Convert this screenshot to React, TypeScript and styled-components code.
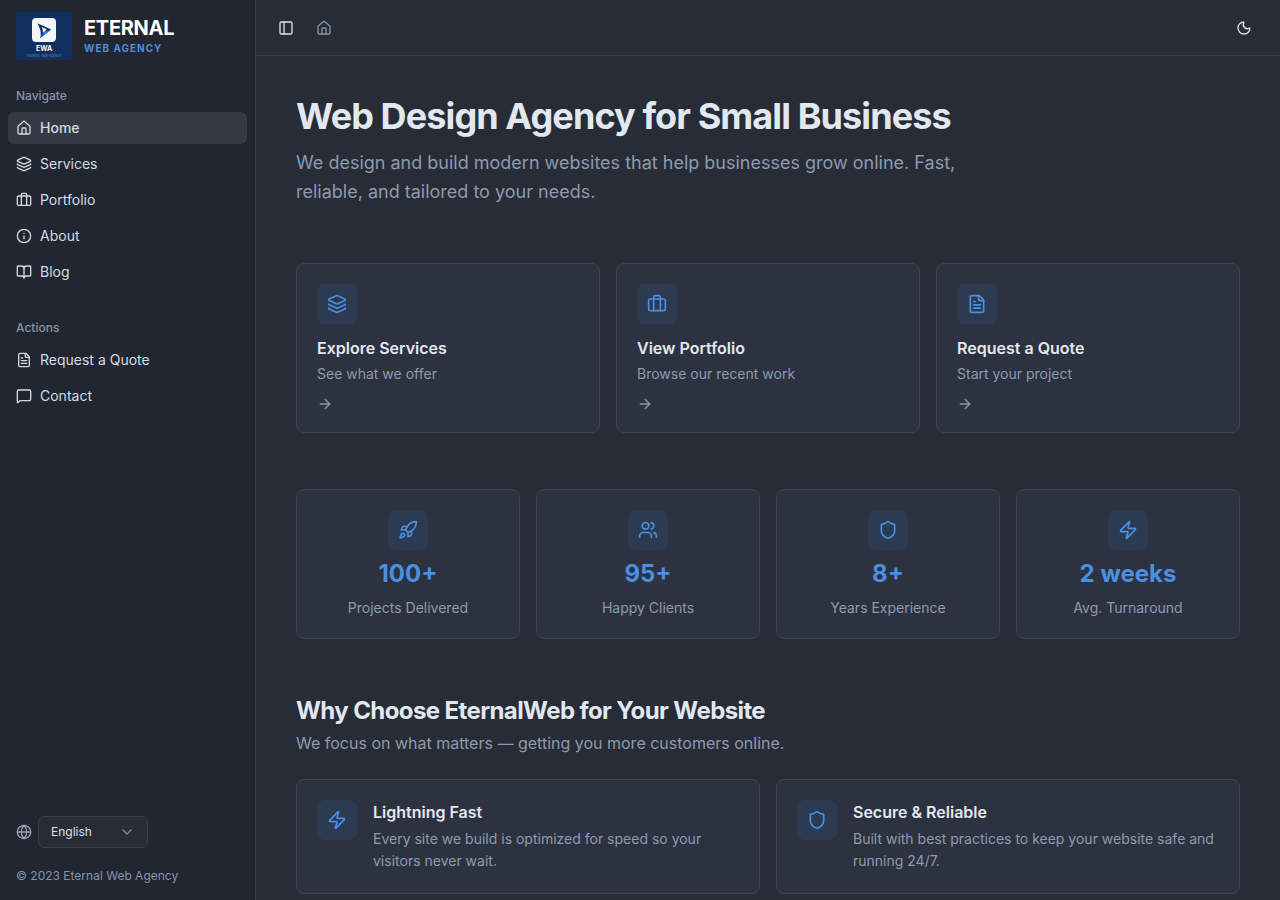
import { ReactNode } from "react";
import styled, { createGlobalStyle } from "styled-components";
import {
  ArrowRight,
  BookOpen,
  Briefcase,
  ChevronDown,
  FileText,
  Globe,
  House,
  Info,
  Layers,
  MessageSquare,
  Moon,
  PanelLeft,
  Rocket,
  Shield,
  Users,
  Zap,
} from "lucide-react";

const navigate = [
  { label: "Home", icon: <House size={16} />, active: true },
  { label: "Services", icon: <Layers size={16} /> },
  { label: "Portfolio", icon: <Briefcase size={16} /> },
  { label: "About", icon: <Info size={16} /> },
  { label: "Blog", icon: <BookOpen size={16} /> },
];

const actions = [
  { label: "Request a Quote", icon: <FileText size={16} /> },
  { label: "Contact", icon: <MessageSquare size={16} /> },
];

const quickLinks = [
  { title: "Explore Services", text: "See what we offer", icon: <Layers size={20} /> },
  { title: "View Portfolio", text: "Browse our recent work", icon: <Briefcase size={20} /> },
  { title: "Request a Quote", text: "Start your project", icon: <FileText size={20} /> },
];

const stats = [
  { value: "100+", label: "Projects Delivered", icon: <Rocket size={20} /> },
  { value: "95+", label: "Happy Clients", icon: <Users size={20} /> },
  { value: "8+", label: "Years Experience", icon: <Shield size={20} /> },
  { value: "2 weeks", label: "Avg. Turnaround", icon: <Zap size={20} /> },
];

const reasons = [
  {
    title: "Lightning Fast",
    text: "Every site we build is optimized for speed so your visitors never wait.",
    icon: <Zap size={20} />,
  },
  {
    title: "Secure & Reliable",
    text: "Built with best practices to keep your website safe and running 24/7.",
    icon: <Shield size={20} />,
  },
];

const NavGroup = ({ title, items }: { title: string; items: { label: string; icon: ReactNode; active?: boolean }[] }) => (
  <Group>
    <GroupLabel>{title}</GroupLabel>
    {items.map((item) => (
      <NavItem key={item.label} $active={item.active}>
        {item.icon}
        {item.label}
      </NavItem>
    ))}
  </Group>
);

const App = () => {
  return (
    <Shell>
      <GlobalStyle />
      <Sidebar>
        <Brand>
          <LogoBox>
            <LogoMark>
              <svg width="20" height="20" viewBox="0 0 18 18">
                <path d="M3 3 L15.5 8.5 L5.5 16.5 Q7.5 10 3 3Z" fill="#12346b" />
                <path d="M15.5 8.5 L5.5 16.5 L9.5 10.5Z" fill="#2d7fd6" />
                <path d="M7 6.2 L11.5 8.6 L8 11.8 Q8.6 9 7 6.2Z" fill="#ffffff" />
              </svg>
            </LogoMark>
            <LogoText>EWA</LogoText>
            <LogoTiny>ETERNAL WEB AGENCY</LogoTiny>
          </LogoBox>
          <BrandText>
            <BrandName>ETERNAL</BrandName>
            <BrandSub>WEB AGENCY</BrandSub>
          </BrandText>
        </Brand>
        <NavGroup title="Navigate" items={navigate} />
        <NavGroup title="Actions" items={actions} />
        <SidebarFooter>
          <LanguageRow>
            <Globe size={16} />
            <LanguageSelect>
              English
              <ChevronDown size={16} />
            </LanguageSelect>
          </LanguageRow>
          <Copyright>© 2023 Eternal Web Agency</Copyright>
        </SidebarFooter>
      </Sidebar>
      <Main>
        <Topbar>
          <TopbarLeft>
            <PanelLeft size={16} />
            <HomeCrumb>
              <House size={16} />
            </HomeCrumb>
          </TopbarLeft>
          <Moon size={16} />
        </Topbar>
        <Content>
          <Hero>
            <h1>Web Design Agency for Small Business</h1>
            <p>We design and build modern websites that help businesses grow online. Fast, reliable, and tailored to your needs.</p>
          </Hero>
          <QuickGrid>
            {quickLinks.map((link) => (
              <QuickCard key={link.title}>
                <IconTile>{link.icon}</IconTile>
                <CardTitle>{link.title}</CardTitle>
                <CardText>{link.text}</CardText>
                <CardArrow>
                  <ArrowRight size={16} />
                </CardArrow>
              </QuickCard>
            ))}
          </QuickGrid>
          <StatGrid>
            {stats.map((stat) => (
              <StatCard key={stat.label}>
                <IconTile>{stat.icon}</IconTile>
                <StatValue>{stat.value}</StatValue>
                <StatLabel>{stat.label}</StatLabel>
              </StatCard>
            ))}
          </StatGrid>
          <SectionTitle>Why Choose EternalWeb for Your Website</SectionTitle>
          <SectionText>We focus on what matters — getting you more customers online.</SectionText>
          <ReasonGrid>
            {reasons.map((reason) => (
              <ReasonCard key={reason.title}>
                <IconTile>{reason.icon}</IconTile>
                <div>
                  <CardTitle $small>{reason.title}</CardTitle>
                  <ReasonText>{reason.text}</ReasonText>
                </div>
              </ReasonCard>
            ))}
          </ReasonGrid>
        </Content>
      </Main>
    </Shell>
  );
};

//  --- Styling ---
const GlobalStyle = createGlobalStyle`
  * {
    box-sizing: border-box;
  }

  html, body {
    margin: 0;
    height: 100%;
    overflow: hidden;
    background: #282c37;
  }

  body {
    font-family: Inter, "Liberation Sans", sans-serif;
  }
`;

const Shell = styled.div`
  display: flex;
  height: 100vh;
  overflow: hidden;
`;

const Sidebar = styled.aside`
  width: 256px;
  flex-shrink: 0;
  display: flex;
  flex-direction: column;
  padding: 12px 8px 0;
  background: #222630;
  border-right: 1px solid #3b3f4a;
`;

const Brand = styled.div`
  display: flex;
  align-items: center;
  gap: 12px;
  padding: 0 8px;
  margin-bottom: 24px;
`;

const LogoBox = styled.div`
  width: 56px;
  height: 48px;
  flex-shrink: 0;
  display: flex;
  flex-direction: column;
  align-items: center;
  padding-top: 6px;
  border-radius: 2px;
  background: #10305f;
`;

const LogoMark = styled.div`
  width: 24px;
  height: 24px;
  display: flex;
  align-items: center;
  justify-content: center;
  border-radius: 4px;
  background: #f4f6f9;
`;

const LogoText = styled.span`
  margin-top: 3px;
  color: #ffffff;
  font-size: 7px;
  font-weight: 700;
  line-height: 8px;
`;

const LogoTiny = styled.span`
  margin-top: 1px;
  color: #6f87ad;
  font-size: 3px;
  line-height: 4px;
  white-space: nowrap;
`;

const BrandText = styled.div`
  display: flex;
  flex-direction: column;
  padding-bottom: 2px;
`;

const BrandName = styled.span`
  color: #ffffff;
  font-size: 20px;
  font-weight: 700;
  letter-spacing: -0.3px;
  line-height: 26px;
`;

const BrandSub = styled.span`
  color: #4a90e2;
  font-size: 10px;
  font-weight: 700;
  letter-spacing: 1px;
  line-height: 15px;
`;

const Group = styled.nav`
  display: flex;
  flex-direction: column;
  margin-bottom: 28px;
`;

const GroupLabel = styled.div`
  height: 24px;
  padding: 0 8px;
  margin-bottom: 4px;
  color: #8594a9;
  font-size: 12px;
  font-weight: 500;
  line-height: 24px;
`;

const NavItem = styled.a<{ $active?: boolean }>`
  height: 32px;
  display: flex;
  align-items: center;
  gap: 8px;
  padding: 0 8px;
  margin-bottom: 4px;
  border-radius: 6px;
  background: ${(p) => (p.$active ? "#343944" : "transparent")};
  color: #d3dbe6;
  font-size: 14px;
  font-weight: ${(p) => (p.$active ? 500 : 400)};
  line-height: 20px;

  &:last-child {
    margin-bottom: 0;
  }
`;

const SidebarFooter = styled.div`
  margin-top: auto;
  padding: 0 8px 16px;
`;

const LanguageRow = styled.div`
  display: flex;
  align-items: center;
  gap: 6px;
  color: #97a3b4;
`;

const LanguageSelect = styled.div`
  width: 110px;
  height: 32px;
  display: flex;
  align-items: center;
  justify-content: space-between;
  padding: 0 12px;
  border: 1px solid #3b3f4a;
  border-radius: 6px;
  background: #282c37;
  color: #d8e2ef;
  font-size: 12px;
  line-height: 16px;

  svg {
    color: #7f8794;
  }
`;

const Copyright = styled.div`
  margin-top: 20px;
  color: #8594a9;
  font-size: 12px;
  line-height: 16px;
`;

const Main = styled.main`
  flex: 1;
  min-width: 0;
  display: flex;
  flex-direction: column;
  background: #282c37;
`;

const Topbar = styled.header`
  height: 56px;
  flex-shrink: 0;
  display: flex;
  align-items: center;
  justify-content: space-between;
  padding: 0 28px 0 22px;
  border-bottom: 1px solid #3b3f4a;
  color: #d8e2ef;
`;

const TopbarLeft = styled.div`
  display: flex;
  align-items: center;
  gap: 22px;
`;

const HomeCrumb = styled.span`
  display: flex;
  color: #8594a9;
`;

const Content = styled.div`
  padding: 40px 40px 0;
`;

const Hero = styled.section`
  margin-bottom: 56px;

  h1 {
    margin: 0 0 12px;
    color: #e2e8f0;
    font-size: 36px;
    font-weight: 700;
    letter-spacing: -0.9px;
    line-height: 40px;
  }

  p {
    max-width: 672px;
    margin: 0;
    color: #8d9aae;
    font-size: 18px;
    line-height: 1.625;
  }
`;

const Card = styled.div`
  border: 1px solid #3f4450;
  border-radius: 8px;
  background: #2d3240;
`;

const QuickGrid = styled.div`
  display: grid;
  grid-template-columns: repeat(3, 1fr);
  gap: 16px;
  margin-bottom: 56px;
`;

const QuickCard = styled(Card)`
  height: 170px;
  padding: 20px;
`;

const IconTile = styled.div`
  width: 40px;
  height: 40px;
  flex-shrink: 0;
  display: flex;
  align-items: center;
  justify-content: center;
  border-radius: 8px;
  background: #2c3a52;
  color: #4a90e2;
`;

const CardTitle = styled.div<{ $small?: boolean }>`
  margin-top: ${(p) => (p.$small ? "0" : "12px")};
  color: #e2e8f0;
  font-size: 16px;
  font-weight: 600;
  line-height: 24px;
`;

const CardText = styled.div`
  margin-top: 4px;
  color: #8d9aae;
  font-size: 14px;
  line-height: 20px;
`;

const CardArrow = styled.div`
  display: flex;
  margin-top: 12px;
  color: #8d9aae;
`;

const StatGrid = styled.div`
  display: grid;
  grid-template-columns: repeat(4, 1fr);
  gap: 16px;
  margin-bottom: 56px;
`;

const StatCard = styled(Card)`
  height: 150px;
  display: flex;
  flex-direction: column;
  align-items: center;
  padding-top: 20px;
`;

const StatValue = styled.div`
  margin-top: 8px;
  color: #4a90e2;
  font-size: 24px;
  font-weight: 700;
  line-height: 32px;
`;

const StatLabel = styled.div`
  margin-top: 8px;
  color: #8d9aae;
  font-size: 14px;
  line-height: 20px;
`;

const SectionTitle = styled.h2`
  margin: 0;
  color: #e2e8f0;
  font-size: 24px;
  font-weight: 700;
  letter-spacing: -0.6px;
  line-height: 32px;
`;

const SectionText = styled.p`
  margin: 4px 0 24px;
  color: #8d9aae;
  font-size: 16px;
  line-height: 24px;
`;

const ReasonGrid = styled.div`
  display: grid;
  grid-template-columns: repeat(2, 1fr);
  gap: 16px;
`;

const ReasonCard = styled(Card)`
  display: flex;
  gap: 16px;
  padding: 20px;
`;

const ReasonText = styled.p`
  margin: 4px 0 0;
  color: #8d9aae;
  font-size: 14px;
  line-height: 1.625;
`;

export default App;
